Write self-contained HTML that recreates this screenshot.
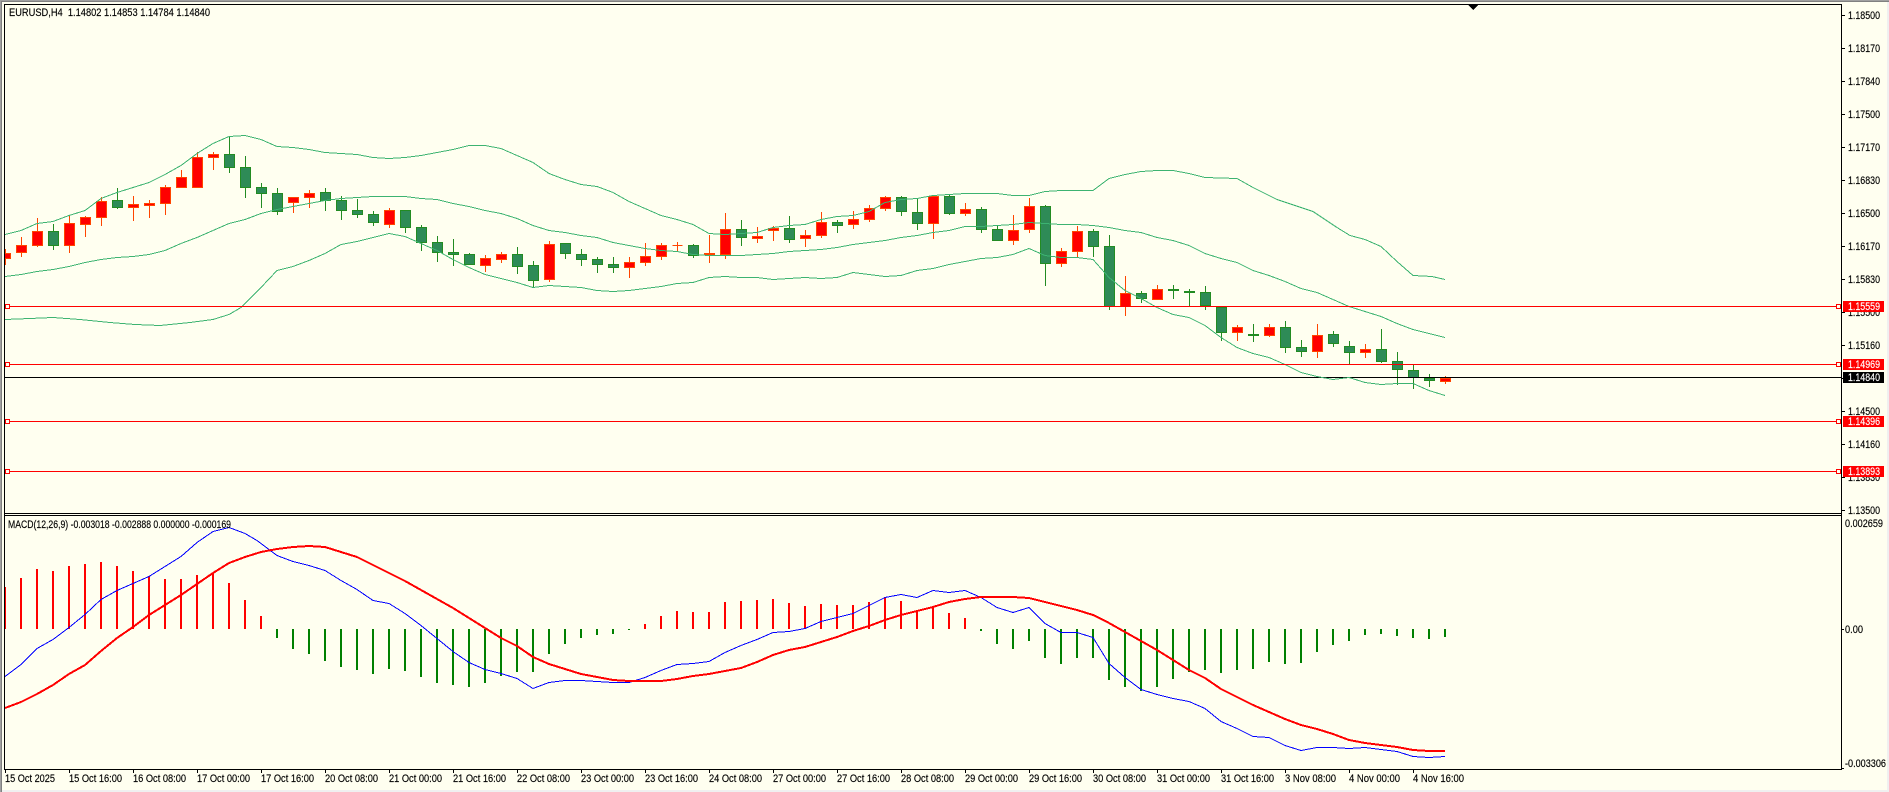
<!DOCTYPE html>
<html><head><meta charset="utf-8"><title>EURUSD,H4</title>
<style>html,body{margin:0;padding:0;background:#fffff0;width:1889px;height:792px;overflow:hidden}svg{display:block}text{font-family:"Liberation Sans",sans-serif;font-size:11px;fill:#000;stroke:#000;stroke-width:.15px}text.w{fill:#fff;stroke:#fff}</style></head>
<body>
<svg width="1889" height="792" viewBox="0 0 1889 792" xmlns="http://www.w3.org/2000/svg">
<defs><clipPath id="c"><rect x="5" y="5" width="1836" height="508"/></clipPath><clipPath id="d"><rect x="5" y="516" width="1836" height="253"/></clipPath></defs>
<rect width="1889" height="792" fill="#fffff0"/>
<g shape-rendering="crispEdges">
<rect x="0" y="0" width="1889" height="1" fill="#a0a0a0"/><rect x="0" y="1" width="1889" height="1" fill="#808080"/>
<rect x="0" y="0" width="1" height="792" fill="#a0a0a0"/><rect x="1" y="1" width="1" height="791" fill="#808080"/>
<rect x="1887" y="2" width="2" height="790" fill="#f0f0f0"/><rect x="2" y="790" width="1887" height="2" fill="#f0f0f0"/>
<g clip-path="url(#c)">
<path fill="none" stroke="#ff4500" d="M5.5 249V265M21.5 237V257M37.5 218V247M69.5 215V253M85.5 216V237M101.5 197V226M133.5 196V221M149.5 200V218M165.5 185V215M181.5 170V188M197.5 152V188M213.5 152V170M293.5 197V213M309.5 190V208M389.5 208V228M485.5 255V272M501.5 252V263M549.5 241V282M629.5 257V278M645.5 243V266M661.5 243V260M677.5 242V251M709.5 235V263M725.5 213V259M757.5 227V243M773.5 226V241M805.5 230V247M821.5 212V238M853.5 211V229M869.5 205V222M885.5 196V211M933.5 196V239M965.5 203V216M1013.5 215V245M1029.5 198V233M1061.5 248V267M1077.5 226V257M1125.5 276V316M1157.5 285V300M1237.5 325V341M1269.5 324V337M1317.5 324V358M1365.5 344V358M1445.5 376V384"/>
<path fill="#ff0000" stroke="#ff4500" d="M.5 253.5h10v5h-10zM16.5 245.5h10v7h-10zM32.5 231.5h10v14h-10zM64.5 223.5h10v22h-10zM80.5 217.5h10v7h-10zM96.5 201.5h10v16h-10zM128.5 204.5h10v3h-10zM144.5 203.5h10v2h-10zM160.5 187.5h10v16h-10zM176.5 177.5h10v10h-10zM192.5 157.5h10v30h-10zM208.5 154.5h10v3h-10zM288.5 197.5h10v5h-10zM304.5 193.5h10v4h-10zM384.5 210.5h10v14h-10zM480.5 258.5h10v7h-10zM496.5 254.5h10v5h-10zM544.5 244.5h10v35h-10zM624.5 262.5h10v5h-10zM640.5 256.5h10v6h-10zM656.5 245.5h10v11h-10zM672.5 245.5h10v0h-10zM704.5 253.5h10v1h-10zM720.5 229.5h10v25h-10zM752.5 236.5h10v2h-10zM768.5 228.5h10v2h-10zM800.5 235.5h10v3h-10zM816.5 222.5h10v13h-10zM848.5 219.5h10v5h-10zM864.5 208.5h10v11h-10zM880.5 197.5h10v11h-10zM928.5 196.5h10v27h-10zM960.5 209.5h10v4h-10zM1008.5 230.5h10v10h-10zM1024.5 206.5h10v23h-10zM1056.5 251.5h10v12h-10zM1072.5 231.5h10v20h-10zM1120.5 293.5h10v13h-10zM1152.5 289.5h10v10h-10zM1232.5 327.5h10v5h-10zM1264.5 327.5h10v8h-10zM1312.5 335.5h10v16h-10zM1360.5 349.5h10v3h-10zM1440.5 378.5h10v3h-10z"/>
<path fill="none" stroke="#228b22" d="M53.5 224V250M117.5 188V209M229.5 136V173M245.5 156V198M261.5 183V208M277.5 188V215M325.5 188V211M341.5 196V220M357.5 199V218M373.5 211V226M405.5 210V233M421.5 225V251M437.5 236V262M453.5 239V266M469.5 253V265M517.5 247V274M533.5 261V287M565.5 243V259M581.5 249V266M597.5 257V273M613.5 257V273M693.5 244V258M741.5 220V246M789.5 216V243M837.5 220V233M901.5 196V216M917.5 198V230M949.5 195V215M981.5 207V233M997.5 226V241M1045.5 205V286M1093.5 229V257M1109.5 235V310M1141.5 291V303M1173.5 285V299M1189.5 289V307M1205.5 286V310M1221.5 307V341M1253.5 324V342M1285.5 321V353M1301.5 340V357M1333.5 331V347M1349.5 341V364M1381.5 329V363M1397.5 352V385M1413.5 364V389M1429.5 374V387"/>
<path fill="#2e8b57" stroke="#228b22" d="M48.5 231.5h10v14h-10zM112.5 200.5h10v7h-10zM224.5 154.5h10v13h-10zM240.5 167.5h10v20h-10zM256.5 187.5h10v6h-10zM272.5 193.5h10v18h-10zM320.5 192.5h10v8h-10zM336.5 200.5h10v10h-10zM352.5 210.5h10v4h-10zM368.5 214.5h10v8h-10zM400.5 210.5h10v17h-10zM416.5 227.5h10v15h-10zM432.5 242.5h10v10h-10zM448.5 252.5h10v2h-10zM464.5 254.5h10v10h-10zM512.5 254.5h10v12h-10zM528.5 265.5h10v15h-10zM560.5 243.5h10v10h-10zM576.5 254.5h10v5h-10zM592.5 259.5h10v5h-10zM608.5 264.5h10v3h-10zM688.5 245.5h10v10h-10zM736.5 229.5h10v8h-10zM784.5 228.5h10v11h-10zM832.5 222.5h10v3h-10zM896.5 197.5h10v14h-10zM912.5 212.5h10v11h-10zM944.5 196.5h10v17h-10zM976.5 209.5h10v20h-10zM992.5 229.5h10v11h-10zM1040.5 206.5h10v57h-10zM1088.5 231.5h10v15h-10zM1104.5 246.5h10v60h-10zM1136.5 293.5h10v5h-10zM1168.5 289.5h10v1h-10zM1184.5 291.5h10v1h-10zM1200.5 292.5h10v13h-10zM1216.5 307.5h10v25h-10zM1248.5 334.5h10v1h-10zM1280.5 327.5h10v20h-10zM1296.5 347.5h10v4h-10zM1328.5 334.5h10v9h-10zM1344.5 346.5h10v6h-10zM1376.5 349.5h10v12h-10zM1392.5 361.5h10v8h-10zM1408.5 370.5h10v7h-10zM1424.5 378.5h10v2h-10z"/>
<rect x="5" y="377" width="1836" height="1" fill="#000"/>
<polyline fill="none" stroke="#3cb371" points="5,234.5 21,230.5 37,223.5 53,221.5 69,215.5 85,210.5 101,198.5 117,192.5 133,187.5 149,182.5 165,174.5 181,165.5 197,153.5 213,143.5 229,136.5 245,135.5 261,139.5 277,146.5 293,147.5 309,149.5 325,152.5 341,153.5 357,154.5 373,157.5 389,158.5 405,157.5 421,155.5 437,152.5 453,149.5 469,145.5 485,145.5 501,148.5 517,155.5 533,162.5 549,173.5 565,179.5 581,184.5 597,186.5 613,192.5 629,201.5 645,208.5 661,215.5 677,219.5 693,224.5 709,233.5 725,234.5 741,233.5 757,232.5 773,227.5 789,225.5 805,224.5 821,219.5 837,216.5 853,215.5 869,211.5 885,202.5 901,199.5 917,198.5 933,195.5 949,194.5 965,193.5 981,193.5 997,193.5 1013,195.5 1029,195.5 1045,191.5 1061,190.5 1077,190.5 1093,190.5 1109,178.5 1125,174.5 1141,171.5 1157,170.5 1173,170.5 1189,173.5 1205,177.5 1237,178.5 1253,187.5 1277,199.5 1313,211.5 1337,227.5 1350,235.5 1365,239.5 1381,246.5 1397,261.5 1413,275.5 1432,276.5 1445,279.5"/>
<polyline fill="none" stroke="#3cb371" points="5,276.5 21,274.5 37,271.5 53,269.5 69,266.5 85,262.5 101,259.5 117,257.5 133,256.5 149,254.5 165,250.5 181,243.5 197,237.5 213,230.5 229,223.5 245,219.5 261,213.5 277,209.5 293,206.5 309,203.5 325,200.5 341,198.5 357,197.5 373,196.5 389,196.5 405,196.5 421,198.5 437,199.5 453,203.5 469,206.5 485,210.5 501,213.5 517,218.5 533,225.5 549,230.5 565,232.5 581,235.5 597,237.5 613,242.5 629,245.5 645,248.5 661,250.5 677,251.5 693,254.5 709,255.5 725,255.5 741,255.5 757,254.5 773,253.5 789,251.5 805,250.5 821,249.5 837,247.5 853,244.5 869,242.5 885,240.5 901,237.5 917,235.5 933,232.5 949,230.5 965,226.5 981,226.5 997,225.5 1013,224.5 1029,222.5 1045,223.5 1061,224.5 1077,224.5 1093,225.5 1109,227.5 1125,230.5 1141,232.5 1157,237.5 1173,240.5 1189,245.5 1205,253.5 1221,258.5 1237,262.5 1253,270.5 1269,275.5 1285,281.5 1301,288.5 1317,292.5 1333,299.5 1349,306.5 1365,311.5 1381,316.5 1397,323.5 1413,329.5 1429,333.5 1445,337.5"/>
<polyline fill="none" stroke="#3cb371" points="5,319.5 30,318.5 53,317.5 80,319.5 110,322.5 135,324.5 160,325.5 190,322.5 213,319.5 229,314.5 241,307.5 261,287.5 277,270.5 293,266.5 309,260.5 325,253.5 341,244.5 357,241.5 373,237.5 389,233.5 405,236.5 421,243.5 437,250.5 453,259.5 469,267.5 485,274.5 501,278.5 517,282.5 533,287.5 549,285.5 565,286.5 581,287.5 597,290.5 613,291.5 629,290.5 645,288.5 661,286.5 677,283.5 693,282.5 709,277.5 725,276.5 741,277.5 757,277.5 773,279.5 789,278.5 805,277.5 821,278.5 837,277.5 853,272.5 869,274.5 885,276.5 901,275.5 917,270.5 933,268.5 949,264.5 965,261.5 981,258.5 997,257.5 1013,254.5 1029,248.5 1045,255.5 1061,257.5 1077,257.5 1093,259.5 1109,277.5 1125,290.5 1141,298.5 1157,307.5 1173,314.5 1189,317.5 1205,325.5 1221,337.5 1237,347.5 1253,353.5 1269,357.5 1285,364.5 1301,372.5 1317,376.5 1333,379.5 1349,377.5 1365,382.5 1381,384.5 1397,383.5 1413,383.5 1429,390.5 1445,395.5"/>
</g>
<g fill="#ff0000"><rect x="5" y="306" width="1836" height="1"/><rect x="5" y="364" width="1836" height="1"/><rect x="5" y="421" width="1836" height="1"/><rect x="5" y="471" width="1836" height="1"/></g>
<g fill="#fffff0" stroke="#ff0000"><rect x="5.5" y="304.5" width="4" height="4"/><rect x="5.5" y="362.5" width="4" height="4"/><rect x="5.5" y="419.5" width="4" height="4"/><rect x="5.5" y="469.5" width="4" height="4"/><rect x="1836.5" y="304.5" width="4" height="4"/><rect x="1836.5" y="362.5" width="4" height="4"/><rect x="1836.5" y="419.5" width="4" height="4"/><rect x="1836.5" y="469.5" width="4" height="4"/></g>
<g clip-path="url(#d)">
<path fill="none" stroke="#ff0000" stroke-width="2" d="M5 587V629M21 578V629M37 569V629M53 571V629M69 566V629M85 564V629M101 562V629M117 566V629M133 571V629M149 576V629M165 579V629M181 579V629M197 575V629M213 573V629M229 583V629M245 600V629M261 616V629M645 624V629M661 616V629M677 611V629M693 612V629M709 612V629M725 602V629M741 601V629M757 600V629M773 599V629M789 603V629M805 606V629M821 604V629M837 605V629M853 605V629M869 602V629M885 597V629M901 601V629M917 612V629M933 608V629M949 613V629M965 618V629"/>
<path fill="none" stroke="#008000" stroke-width="2" d="M277 629V638M293 629V649M309 629V654M325 629V661M341 629V667M357 629V670M373 629V674M389 629V669M405 629V671M421 629V677M437 629V683M453 629V685M469 629V687M485 629V683M501 629V676M517 629V672M533 629V672M549 629V654M565 629V644M581 629V638M597 629V635M613 629V634M629 629V630M981 629V631M997 629V644M1013 629V649M1029 629V641M1045 629V658M1061 629V664M1077 629V658M1093 629V658M1109 629V680M1125 629V687M1141 629V691M1157 629V687M1173 629V679M1189 629V672M1205 629V670M1221 629V673M1237 629V670M1253 629V669M1269 629V662M1285 629V664M1301 629V663M1317 629V652M1333 629V645M1349 629V641M1365 629V635M1381 629V634M1397 629V636M1413 629V638M1429 629V639M1445 629V637"/>
<polyline fill="none" stroke="#0000ff" points="5,676.5 21,664.5 37,648.5 53,639.5 69,627.5 85,614.5 101,599.5 117,590.5 133,583.5 149,576.5 165,566.5 181,556.5 197,542.5 213,531.5 229,527.5 245,533.5 257,540.5 277,555.5 293,561.5 309,565.5 325,570.5 341,580.5 357,589.5 373,600.5 389,603.5 405,613.5 421,625.5 437,638.5 453,651.5 469,662.5 485,669.5 501,673.5 517,678.5 533,688.5 549,682.5 565,680.5 581,680.5 597,681.5 613,682.5 629,682.5 645,677.5 661,670.5 677,664.5 693,663.5 709,661.5 725,652.5 741,645.5 757,639.5 773,632.5 789,631.5 805,628.5 821,621.5 837,617.5 853,613.5 869,605.5 885,597.5 901,594.5 917,597.5 933,590.5 949,592.5 965,590.5 981,597.5 997,607.5 1013,612.5 1029,607.5 1045,623.5 1061,632.5 1077,632.5 1093,637.5 1109,663.5 1125,677.5 1141,689.5 1157,694.5 1173,698.5 1189,701.5 1205,708.5 1221,721.5 1237,728.5 1253,736.5 1269,737.5 1285,745.5 1301,750.5 1317,747.5 1333,747.5 1349,748.5 1365,747.5 1381,749.5 1397,751.5 1413,756.5 1429,757.5 1445,756.5"/>
<polyline fill="none" stroke="#ff0000" stroke-width="2" transform="translate(0,-.5)" points="5,708.5 21,702.5 37,694.5 53,685.5 69,674.5 85,665.5 101,651.5 117,638.5 133,627.5 149,615.5 165,605.5 181,595.5 197,584.5 213,573.5 229,563.5 245,557.5 261,552.5 277,549.5 293,547.5 309,546.5 325,547.5 341,552.5 357,557.5 373,565.5 389,573.5 405,581.5 421,590.5 437,599.5 453,608.5 469,618.5 485,628.5 501,638.5 517,646.5 533,657.5 549,664.5 565,669.5 581,674.5 597,677.5 613,680.5 629,681.5 645,681.5 661,681.5 677,679.5 693,676.5 709,674.5 725,671.5 741,668.5 757,662.5 773,655.5 789,650.5 805,647.5 821,642.5 837,637.5 853,631.5 869,626.5 885,620.5 901,615.5 917,611.5 933,607.5 949,602.5 965,599.5 981,597.5 997,597.5 1013,597.5 1029,598.5 1045,602.5 1061,606.5 1077,610.5 1093,615.5 1109,623.5 1125,632.5 1141,641.5 1157,650.5 1173,660.5 1189,670.5 1205,678.5 1221,689.5 1237,697.5 1253,705.5 1269,712.5 1285,719.5 1301,725.5 1317,729.5 1333,734.5 1349,740.5 1365,743.5 1381,745.5 1397,747.5 1413,750.5 1429,751.5 1445,751.5"/>
</g>
<g fill="#000">
<rect x="4" y="4" width="1838" height="1"/><rect x="4" y="4" width="1" height="766"/><rect x="1841" y="4" width="1" height="766"/>
<rect x="4" y="513" width="1838" height="1"/><rect x="4" y="515" width="1838" height="1"/><rect x="4" y="769" width="1838" height="1"/>
<path d="M1842 15h3v1h-3zM1842 48h3v1h-3zM1842 81h3v1h-3zM1842 114h3v1h-3zM1842 147h3v1h-3zM1842 180h3v1h-3zM1842 213h3v1h-3zM1842 246h3v1h-3zM1842 279h3v1h-3zM1842 312h3v1h-3zM1842 345h3v1h-3zM1842 378h3v1h-3zM1842 411h3v1h-3zM1842 444h3v1h-3zM1842 477h3v1h-3zM1842 510h3v1h-3zM1842 629h2v1h-2zM1842 768h2v1h-2z"/>
<path d="M5 770h1v3h-1zM69 770h1v3h-1zM133 770h1v3h-1zM197 770h1v3h-1zM261 770h1v3h-1zM325 770h1v3h-1zM389 770h1v3h-1zM453 770h1v3h-1zM517 770h1v3h-1zM581 770h1v3h-1zM645 770h1v3h-1zM709 770h1v3h-1zM773 770h1v3h-1zM837 770h1v3h-1zM901 770h1v3h-1zM965 770h1v3h-1zM1029 770h1v3h-1zM1093 770h1v3h-1zM1157 770h1v3h-1zM1221 770h1v3h-1zM1285 770h1v3h-1zM1349 770h1v3h-1zM1413 770h1v3h-1z"/>
<path d="M1468 5h10l-5 5z"/>
</g>
</g>
<g>
<text x="9" y="16" textLength="201" lengthAdjust="spacingAndGlyphs">EURUSD,H4&#160;&#160;1.14802 1.14853 1.14784 1.14840</text>
<text x="8" y="528" textLength="223" lengthAdjust="spacingAndGlyphs">MACD(12,26,9) -0.003018 -0.002888 0.000000 -0.000169</text>
<text x="1848" y="19" textLength="32" lengthAdjust="spacingAndGlyphs">1.18500</text>
<text x="1848" y="52" textLength="32" lengthAdjust="spacingAndGlyphs">1.18170</text>
<text x="1848" y="85" textLength="32" lengthAdjust="spacingAndGlyphs">1.17840</text>
<text x="1848" y="118" textLength="32" lengthAdjust="spacingAndGlyphs">1.17500</text>
<text x="1848" y="151" textLength="32" lengthAdjust="spacingAndGlyphs">1.17170</text>
<text x="1848" y="184" textLength="32" lengthAdjust="spacingAndGlyphs">1.16830</text>
<text x="1848" y="217" textLength="32" lengthAdjust="spacingAndGlyphs">1.16500</text>
<text x="1848" y="250" textLength="32" lengthAdjust="spacingAndGlyphs">1.16170</text>
<text x="1848" y="283" textLength="32" lengthAdjust="spacingAndGlyphs">1.15830</text>
<text x="1848" y="316" textLength="32" lengthAdjust="spacingAndGlyphs">1.15500</text>
<text x="1848" y="349" textLength="32" lengthAdjust="spacingAndGlyphs">1.15160</text>
<text x="1848" y="415" textLength="32" lengthAdjust="spacingAndGlyphs">1.14500</text>
<text x="1848" y="448" textLength="32" lengthAdjust="spacingAndGlyphs">1.14160</text>
<text x="1848" y="481" textLength="32" lengthAdjust="spacingAndGlyphs">1.13830</text>
<text x="1848" y="514" textLength="32" lengthAdjust="spacingAndGlyphs">1.13500</text>
<g shape-rendering="crispEdges"><rect x="1843" y="301" width="41" height="11" fill="#ff0000"/><rect x="1843" y="359" width="41" height="11" fill="#ff0000"/><rect x="1843" y="372" width="41" height="11" fill="#000"/><rect x="1843" y="416" width="41" height="11" fill="#ff0000"/><rect x="1843" y="466" width="41" height="11" fill="#ff0000"/></g>
<text class="w" x="1848" y="310" textLength="32" lengthAdjust="spacingAndGlyphs">1.15559</text>
<text class="w" x="1848" y="368" textLength="32" lengthAdjust="spacingAndGlyphs">1.14969</text>
<text class="w" x="1848" y="381" textLength="32" lengthAdjust="spacingAndGlyphs">1.14840</text>
<text class="w" x="1848" y="425" textLength="32" lengthAdjust="spacingAndGlyphs">1.14396</text>
<text class="w" x="1848" y="475" textLength="32" lengthAdjust="spacingAndGlyphs">1.13893</text>
<text x="1845" y="527" textLength="38" lengthAdjust="spacingAndGlyphs">0.002659</text>
<text x="1845" y="633" textLength="18" lengthAdjust="spacingAndGlyphs">0.00</text>
<text x="1845" y="767" textLength="41" lengthAdjust="spacingAndGlyphs">-0.003306</text>
<text x="5" y="782" textLength="50" lengthAdjust="spacingAndGlyphs">15 Oct 2025</text>
<text x="69" y="782" textLength="53" lengthAdjust="spacingAndGlyphs">15 Oct 16:00</text>
<text x="133" y="782" textLength="53" lengthAdjust="spacingAndGlyphs">16 Oct 08:00</text>
<text x="197" y="782" textLength="53" lengthAdjust="spacingAndGlyphs">17 Oct 00:00</text>
<text x="261" y="782" textLength="53" lengthAdjust="spacingAndGlyphs">17 Oct 16:00</text>
<text x="325" y="782" textLength="53" lengthAdjust="spacingAndGlyphs">20 Oct 08:00</text>
<text x="389" y="782" textLength="53" lengthAdjust="spacingAndGlyphs">21 Oct 00:00</text>
<text x="453" y="782" textLength="53" lengthAdjust="spacingAndGlyphs">21 Oct 16:00</text>
<text x="517" y="782" textLength="53" lengthAdjust="spacingAndGlyphs">22 Oct 08:00</text>
<text x="581" y="782" textLength="53" lengthAdjust="spacingAndGlyphs">23 Oct 00:00</text>
<text x="645" y="782" textLength="53" lengthAdjust="spacingAndGlyphs">23 Oct 16:00</text>
<text x="709" y="782" textLength="53" lengthAdjust="spacingAndGlyphs">24 Oct 08:00</text>
<text x="773" y="782" textLength="53" lengthAdjust="spacingAndGlyphs">27 Oct 00:00</text>
<text x="837" y="782" textLength="53" lengthAdjust="spacingAndGlyphs">27 Oct 16:00</text>
<text x="901" y="782" textLength="53" lengthAdjust="spacingAndGlyphs">28 Oct 08:00</text>
<text x="965" y="782" textLength="53" lengthAdjust="spacingAndGlyphs">29 Oct 00:00</text>
<text x="1029" y="782" textLength="53" lengthAdjust="spacingAndGlyphs">29 Oct 16:00</text>
<text x="1093" y="782" textLength="53" lengthAdjust="spacingAndGlyphs">30 Oct 08:00</text>
<text x="1157" y="782" textLength="53" lengthAdjust="spacingAndGlyphs">31 Oct 00:00</text>
<text x="1221" y="782" textLength="53" lengthAdjust="spacingAndGlyphs">31 Oct 16:00</text>
<text x="1285" y="782" textLength="51" lengthAdjust="spacingAndGlyphs">3 Nov 08:00</text>
<text x="1349" y="782" textLength="51" lengthAdjust="spacingAndGlyphs">4 Nov 00:00</text>
<text x="1413" y="782" textLength="51" lengthAdjust="spacingAndGlyphs">4 Nov 16:00</text>
</g>
</svg>
</body></html>
